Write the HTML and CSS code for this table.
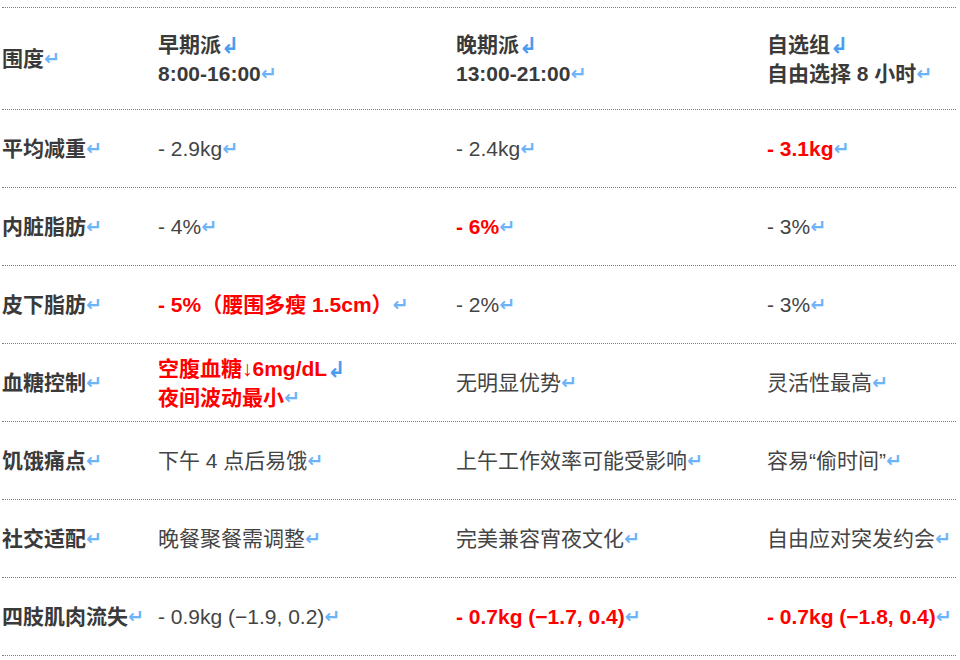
FILE: index.html
```html
<!DOCTYPE html>
<html lang="zh">
<head>
<meta charset="utf-8">
<link rel="stylesheet" href="styles.css">
</head>
<body>
<div class="table">
  <div class="row head">
    <div class="cell label">围度<span class="rt">↵</span></div>
    <div class="cell bold">早期派<span class="rt hard">↲</span><br>8:00-16:00<span class="rt">↵</span></div>
    <div class="cell bold">晚期派<span class="rt hard">↲</span><br>13:00-21:00<span class="rt">↵</span></div>
    <div class="cell bold">自选组<span class="rt hard">↲</span><br>自由选择 8 小时<span class="rt">↵</span></div>
  </div>
  <div class="row">
    <div class="cell label">平均减重<span class="rt">↵</span></div>
    <div class="cell">- 2.9kg<span class="rt">↵</span></div>
    <div class="cell">- 2.4kg<span class="rt">↵</span></div>
    <div class="cell red">- 3.1kg<span class="rt">↵</span></div>
  </div>
  <div class="row">
    <div class="cell label">内脏脂肪<span class="rt">↵</span></div>
    <div class="cell">- 4%<span class="rt">↵</span></div>
    <div class="cell red">- 6%<span class="rt">↵</span></div>
    <div class="cell">- 3%<span class="rt">↵</span></div>
  </div>
  <div class="row">
    <div class="cell label">皮下脂肪<span class="rt">↵</span></div>
    <div class="cell red">- 5%（腰围多瘦 1.5cm）<span class="rt">↵</span></div>
    <div class="cell">- 2%<span class="rt">↵</span></div>
    <div class="cell">- 3%<span class="rt">↵</span></div>
  </div>
  <div class="row">
    <div class="cell label">血糖控制<span class="rt">↵</span></div>
    <div class="cell red">空腹血糖↓6mg/dL<span class="rt hard">↲</span><br>夜间波动最小<span class="rt">↵</span></div>
    <div class="cell">无明显优势<span class="rt">↵</span></div>
    <div class="cell">灵活性最高<span class="rt">↵</span></div>
  </div>
  <div class="row">
    <div class="cell label">饥饿痛点<span class="rt">↵</span></div>
    <div class="cell">下午 4 点后易饿<span class="rt">↵</span></div>
    <div class="cell">上午工作效率可能受影响<span class="rt">↵</span></div>
    <div class="cell">容易“偷时间”<span class="rt">↵</span></div>
  </div>
  <div class="row">
    <div class="cell label">社交适配<span class="rt">↵</span></div>
    <div class="cell">晚餐聚餐需调整<span class="rt">↵</span></div>
    <div class="cell">完美兼容宵夜文化<span class="rt">↵</span></div>
    <div class="cell">自由应对突发约会<span class="rt">↵</span></div>
  </div>
  <div class="row last">
    <div class="cell label">四肢肌肉流失<span class="rt">↵</span></div>
    <div class="cell">- 0.9kg (−1.9, 0.2)<span class="rt">↵</span></div>
    <div class="cell red">- 0.7kg (−1.7, 0.4)<span class="rt">↵</span></div>
    <div class="cell red">- 0.7kg (−1.8, 0.4)<span class="rt">↵</span></div>
  </div>
</div>
</body>
</html>
```

FILE: styles.css
```css
html, body {
  margin: 0;
  padding: 0;
  background: #ffffff;
}
body {
  font-family: "Liberation Sans", "Noto Sans CJK SC", sans-serif;
  font-size: 21px;
  color: #444444;
}
.table {
  margin-top: 7px;
  margin-left: 2px;
  width: 954px;
}
.row {
  display: grid;
  grid-template-columns: 156px 298px 311px 1fr;
  align-items: center;
  height: 78px;
  box-sizing: border-box;
  border-top: 1px dotted #7c7c7c;
}
.row.head {
  height: 102px;
}
.row.last {
  border-bottom: 1px dotted #7c7c7c;
  height: 79px;
}
.cell {
  line-height: 29px;
  white-space: nowrap;
}
.label {
  font-weight: bold;
  color: #3a3a3a;
}
.bold {
  font-weight: bold;
  color: #3a3a3a;
}
.red {
  font-weight: bold;
  color: #ff0000;
}
.rt {
  font-family: "DejaVu Sans", sans-serif;
  font-size: 19px;
  line-height: 0;
  font-weight: bold;
  color: #6db3f7;
  vertical-align: 1px;
}
.rt.hard {
  font-size: 22px;
  color: #4a9cf0;
  vertical-align: -1px;
}
```
